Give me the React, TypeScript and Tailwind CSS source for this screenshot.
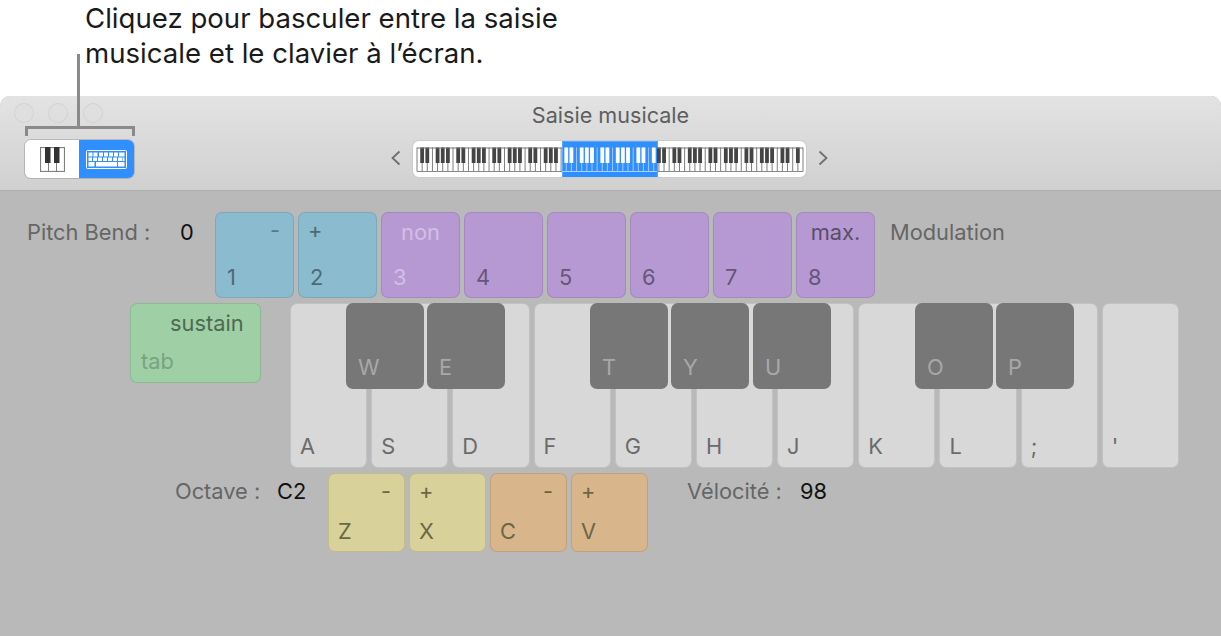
const whiteKeys = ["A", "S", "D", "F", "G", "H", "J", "K", "L", ";", "'"]

const blackKeys = [
  { label: "W", pos: "left-[56px]" },
  { label: "E", pos: "left-[137px]" },
  { label: "T", pos: "left-[300px]" },
  { label: "Y", pos: "left-[381px]" },
  { label: "U", pos: "left-[463px]" },
  { label: "O", pos: "left-[625px]" },
  { label: "P", pos: "left-[706px]" },
]

const topKeys = [
  { num: "1", top: "-", color: "bg-[#8bbbce]", numColor: "text-[#4c6a78] pl-[11px]", topColor: "text-[#5a7a88] justify-end pr-[13px] pb-[4px]" },
  { num: "2", top: "+", color: "bg-[#8bbbce]", numColor: "text-[#4c6a78] pl-[11px]", topColor: "text-[#4c6a78] pl-[9px] pb-[4px]" },
  { num: "3", top: "non", color: "bg-[#b699d3]", numColor: "text-[#d2bfe5] pl-[11px]", topColor: "text-[#d2bfe5] justify-center" },
  { num: "4", top: "", color: "bg-[#b699d3]", numColor: "text-[#66567a] pl-[11px]", topColor: "" },
  { num: "5", top: "", color: "bg-[#b699d3]", numColor: "text-[#66567a] pl-[11px]", topColor: "" },
  { num: "6", top: "", color: "bg-[#b699d3]", numColor: "text-[#66567a] pl-[11px]", topColor: "" },
  { num: "7", top: "", color: "bg-[#b699d3]", numColor: "text-[#66567a] pl-[11px]", topColor: "" },
  { num: "8", top: "max.", color: "bg-[#b699d3]", numColor: "text-[#66567a] pl-[11px]", topColor: "text-[#5b4d6b] justify-center" },
]

const bottomKeys = [
  { num: "Z", top: "-", color: "bg-[#d8d19a]", topColor: "text-[#6b6745] justify-end pr-[13px] pb-[4px]" },
  { num: "X", top: "+", color: "bg-[#d8d19a]", topColor: "text-[#6b6745] pl-[9px] pb-[4px]" },
  { num: "C", top: "-", color: "bg-[#d9b58b]", topColor: "text-[#6b6745] justify-end pr-[13px] pb-[4px]" },
  { num: "V", top: "+", color: "bg-[#d9b58b]", topColor: "text-[#6b6745] pl-[9px] pb-[4px]" },
]

function MiniPiano() {
  // 128 notes, C-2 to G8, same as the real control
  const whiteW = 386 / 75
  const blackOffsets = [1, 2, 4, 5, 6]
  const whites = Array.from({ length: 76 }, (_, i) => i * whiteW)
  const blacks: number[] = []
  for (let i = 0; i < 75; i++) {
    if (blackOffsets.includes(i % 7)) blacks.push(i * whiteW)
  }
  const selStart = 145
  const selEnd = 240
  return (
    <svg width="393" height="37" viewBox="0 0 393 37" className="block">
      <rect x="149.5" y="0.5" width="95" height="36" fill="#2f8fff" stroke="#5aa6ff" />
      <g transform="translate(4 6.5)">
        {whites.map((x) => {
          const inSel = x >= selStart && x <= selEnd
          return (
            <line key={x} x1={x} x2={x} y1="0" y2="24" stroke={inSel ? "#a9d0ff" : "#6f6f6f"} strokeWidth="0.9" />
          )
        })}
        {blacks.map((x) => {
          const inSel = x >= selStart && x <= selEnd
          return <rect key={x} x={x - 1.9} y="0" width="3.8" height="15.5" fill={inSel ? "#ffffff" : "#444444"} />
        })}
        <line x1="0" x2={selStart} y1="0.5" y2="0.5" stroke="#777" />
        <line x1={selEnd} x2="386" y1="0.5" y2="0.5" stroke="#777" />
        <line x1="0" x2={selStart} y1="24" y2="24" stroke="#888" />
        <line x1={selEnd} x2="386" y1="24" y2="24" stroke="#888" />
        <line x1={selStart} x2={selEnd} y1="24" y2="24" stroke="#a9d0ff" />
      </g>
    </svg>
  )
}

function PianoIcon() {
  return (
    <svg width="25" height="25" viewBox="0 0 25 25">
      <rect x="0.5" y="0.5" width="24" height="24" fill="#fff" stroke="#808080" strokeWidth="1.2" />
      <line x1="8.5" x2="8.5" y1="0" y2="25" stroke="#808080" />
      <line x1="16.5" x2="16.5" y1="0" y2="25" stroke="#808080" />
      <rect x="5" y="0" width="5.5" height="16" fill="#333" />
      <rect x="14" y="0" width="5.5" height="16" fill="#333" />
    </svg>
  )
}

function KeyboardIcon() {
  const row1 = [7.5, 13, 18, 23, 28]
  const row2 = [7, 12, 17, 22, 27, 32]
  return (
    <svg width="41" height="19" viewBox="0 0 41 19">
      <rect x="0.5" y="0.5" width="40" height="18" rx="1" fill="none" stroke="#fff" />
      <rect x="2.5" y="2.5" width="4" height="4" fill="#fff" />
      {row1.map((x) => (
        <rect key={x} x={x} y="2.5" width="4" height="4" fill="#fff" />
      ))}
      <rect x="33" y="2.5" width="5.5" height="4" fill="#fff" />
      <rect x="2.5" y="7.5" width="3.5" height="3.5" fill="#fff" />
      {row2.map((x) => (
        <rect key={x} x={x} y="7.5" width="4" height="3.5" fill="#fff" />
      ))}
      <rect x="36.5" y="7.5" width="2" height="3.5" fill="#fff" />
      <rect x="2.5" y="12" width="6" height="4.5" fill="#fff" />
      <rect x="10" y="12" width="21" height="4.5" fill="#fff" />
      <rect x="32" y="12" width="6.5" height="4.5" fill="#fff" />
    </svg>
  )
}

function ColorKey({ num, top, color, numColor, topColor, height }: { num: string; top: string; color: string; numColor: string; topColor: string; height: string }) {
  return (
    <div className={`${color} ${height} flex flex-col justify-between rounded-[7px] border border-black/10 pt-[5px] pb-[6px]`}>
      <div className={`flex h-[28px] items-center text-[21.8px] ${topColor}`}>{top}</div>
      <div className={`text-[21.8px] leading-[28px] ${numColor}`}>{num}</div>
    </div>
  )
}

export default function App() {
  return (
    <div className="relative h-[636px] w-[1221px] overflow-hidden bg-white font-['Inter',sans-serif]">
      {/* callout */}
      <div className="h-[96px] pl-[85px] pt-[1px] text-[27.6px] leading-[35px] text-[#1a1a1a]">
        <p>Cliquez pour basculer entre la saisie</p>
        <p>musicale et le clavier à l’écran.</p>
      </div>

      <div className="h-[540px] overflow-hidden rounded-t-[10px] bg-[#b9b9b9]">
        {/* title bar */}
        <div className="h-[95px] border-b border-[#b0b0b0] bg-gradient-to-b from-[#e3e3e3] to-[#d0d0d0]">
          <div className="relative flex h-[43px] items-center justify-center pb-[5px] text-[21.6px] text-[#5e5e5e]">
            <div className="absolute left-[14px] top-[7px] flex gap-[14px]">
              <div className="size-[20px] rounded-full border border-black/5 bg-[#dfdfdf]" />
              <div className="size-[20px] rounded-full border border-black/5 bg-[#dfdfdf]" />
              <div className="ml-[1px] size-[20px] rounded-full border border-black/5 bg-[#dfdfdf]" />
            </div>
            Saisie musicale
          </div>
          <div className="grid grid-cols-[1fr_auto_1fr] items-center">
            <div className="pl-[24px]">
              <div className="flex h-[40px] w-[111px] overflow-hidden rounded-[7px] border border-black/15">
                <div className="flex w-[54px] items-center justify-center bg-white">
                  <PianoIcon />
                </div>
                <div className="flex flex-1 items-center justify-center bg-[#2f8fff]">
                  <KeyboardIcon />
                </div>
              </div>
            </div>
            <div className="flex items-center gap-[10px] pr-[2px]">
              <svg width="12" height="16" viewBox="0 0 12 16" className="-mt-[2px]">
                <path d="M9.5 1.5 2.5 8l7 6.5" fill="none" stroke="#6f6f6f" strokeWidth="1.8" />
              </svg>
              <div className="h-[38px] w-[395px] overflow-hidden rounded-[7px] border border-black/20 bg-white">
                <MiniPiano />
              </div>
              <svg width="12" height="16" viewBox="0 0 12 16" className="-mt-[2px]">
                <path d="M2.5 1.5 9.5 8l-7 6.5" fill="none" stroke="#6f6f6f" strokeWidth="1.8" />
              </svg>
            </div>
            <div />
          </div>
        </div>

        {/* pitch bend row */}
        <div className="flex pl-[27px] pt-[21px] text-[21.8px]">
          <div className="flex w-[188px] pt-[6px] leading-[28px]">
            <span className="w-[153px] text-[#666666]">Pitch Bend :</span>
            <span className="text-[#111111]">0</span>
          </div>
          <div className="grid w-[660px] grid-cols-8 gap-1">
            {topKeys.map((k) => (
              <ColorKey key={k.num} {...k} height="h-[86px]" />
            ))}
          </div>
          <span className="pl-[15px] pt-[6px] leading-[28px] text-[#666666]">Modulation</span>
        </div>

        {/* main keys row */}
        <div className="flex pl-[130px] pt-[5px]">
          <div className="flex h-[80px] w-[131px] flex-col justify-between rounded-[7px] border border-black/10 bg-[#9fcfa5] pb-[7px] pt-[5px] text-[21.8px]">
            <div className="pl-[39px] leading-[28px] text-[#4d6b52]">sustain</div>
            <div className="pl-[10px] leading-[28px] text-[#7aa381]">tab</div>
          </div>
          <div className="relative ml-[29px] grid h-[165px] w-[889px] grid-cols-11 gap-1">
            {whiteKeys.map((k) => (
              <div key={k} className="flex items-end rounded-[7px] border border-black/10 bg-[#d8d8d8] pb-[7px] pl-[9px] text-[21.8px] leading-[28px] text-[#6b6b6b]">
                {k}
              </div>
            ))}
            {blackKeys.map((k) => (
              <div key={k.label} className={`absolute top-0 flex h-[86px] w-[78px] items-end rounded-[7px] bg-[#777777] pb-[8px] pl-[12px] text-[21.8px] leading-[28px] text-[#a8a8a8] ${k.pos}`}>
                {k.label}
              </div>
            ))}
          </div>
        </div>

        {/* octave row */}
        <div className="flex pl-[175px] pt-[5px] text-[21.8px]">
          <div className="flex w-[153px] pt-[4px] leading-[28px]">
            <span className="w-[102px] text-[#666666]">Octave :</span>
            <span className="text-[#111111]">C2</span>
          </div>
          <div className="grid w-[320px] grid-cols-4 gap-1">
            {bottomKeys.map((k) => (
              <ColorKey key={k.num} {...k} numColor="text-[#6b6745] pl-[9px]" height="h-[79px]" />
            ))}
          </div>
          <div className="flex pl-[39px] pt-[4px] leading-[28px]">
            <span className="w-[113px] text-[#666666]">Vélocité :</span>
            <span className="text-[#111111]">98</span>
          </div>
        </div>
      </div>

      {/* bracket over the segmented control */}
      <div className="absolute left-[77px] top-[54px] h-[72px] w-[3px] bg-[#8a8a8a]" />
      <div className="absolute left-[25px] top-[126px] h-[10px] w-[110px] border-x-[3px] border-t-[3px] border-[#8a8a8a]" />
    </div>
  )
}
